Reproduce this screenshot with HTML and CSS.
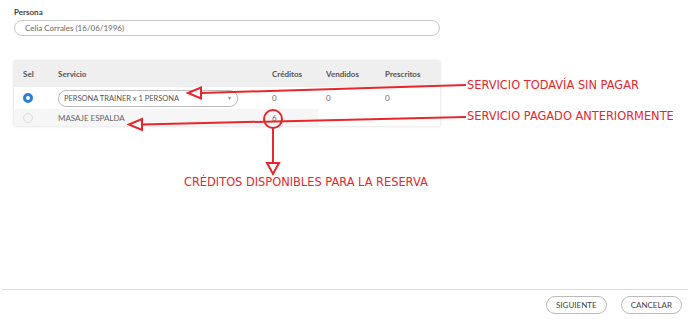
FILE: index.html
```html
<!DOCTYPE html>
<html lang="es">
<head>
    <meta charset="UTF-8">
    <title>Reserva - Servicio</title>
    <link rel="stylesheet" href="styles.css">
</head>
<body>
    <div class="page">
        <div class="form">
            <label class="label">Persona</label>
            <div class="input">Celia Corrales (16/06/1996)</div>

            <div class="table-box">
                <div class="row head">
                    <span class="c-sel">Sel</span>
                    <span class="c-serv">Servicio</span>
                    <span class="c-num">Créditos</span>
                    <span class="c-num2">Vendidos</span>
                    <span class="c-num3">Prescritos</span>
                </div>
                <div class="row">
                    <span class="c-sel"><span class="radio on"></span></span>
                    <span class="c-serv"><span class="select">PERSONA TRAINER x 1 PERSONA<i class="caret">▼</i></span></span>
                    <span class="c-num">0</span>
                    <span class="c-num2">0</span>
                    <span class="c-num3">0</span>
                </div>
                <div class="row paid">
                    <span class="paid-bg">
                        <span class="c-sel"><span class="radio"></span></span>
                        <span class="c-serv">MASAJE ESPALDA</span>
                        <span class="c-num">6</span>
                    </span>
                </div>
            </div>
        </div>

        <div class="footer">
            <button>SIGUIENTE</button>
            <button>CANCELAR</button>
        </div>

        <!-- annotations drawn over the screenshot -->
        <svg class="notes" width="688" height="319" viewBox="0 0 688 319">
            <g stroke="#e8262c" stroke-width="2" fill="none">
                <line x1="201" y1="93" x2="466" y2="85"/>
                <polygon points="188,93 201,87.5 201,98.5" fill="#fff"/>
                <line x1="142" y1="124.5" x2="466" y2="117"/>
                <polygon points="129,124.5 142,119 142,130" fill="#fff"/>
                <circle cx="273" cy="119" r="9"/>
                <line x1="273" y1="128" x2="273" y2="163"/>
                <polygon points="267,163 279,163 273,174" fill="#fff"/>
            </g>
        </svg>
        <span class="note n1">SERVICIO TODAVÍA SIN PAGAR</span>
        <span class="note n2">SERVICIO PAGADO ANTERIORMENTE</span>
        <span class="note n3">CRÉDITOS DISPONIBLES PARA LA RESERVA</span>
    </div>
</body>
</html>
```

FILE: styles.css
```css
/* General */
body {
    margin: 0;
    font-family: 'Lato', 'Open Sans', sans-serif;
    color: #555;
    background: #fff;
}

.page {
    position: relative;
    width: 688px;
    height: 319px;
    display: flex;
    flex-direction: column;
}

.form {
    padding: 7px 248px 0 14px;
    flex: 1;
}

.label {
    display: block;
    font-size: 8px;
    font-weight: bold;
    color: #444;
    margin-bottom: 3px;
}

.input {
    height: 14px;
    line-height: 14px;
    border: 1px solid #c8c8c8;
    border-radius: 8px;
    padding-left: 10px;
    font-size: 8px;
    color: #666;
}

/* Services table */
.table-box {
    margin-top: 25px;
    box-shadow: 0 0 3px rgba(0, 0, 0, 0.18);
    background: #fff;
}

.row {
    display: flex;
    align-items: center;
    height: 22px;
    font-size: 8px;
    color: #666;
}

.row.head {
    height: 26px;
    background: #efefef;
    font-weight: bold;
    color: #555;
}

.row.paid {
    height: 17px;
}

.paid-bg {
    display: flex;
    align-items: center;
    height: 100%;
    width: 304px;
    background: #f6f6f6;
}

.c-sel, .c-serv, .c-num, .c-num2, .c-num3 { flex-shrink: 0; }
.c-sel { width: 44px; padding-left: 9px; box-sizing: border-box; }
.c-serv { width: 214px; }
.c-num { width: 54px; }
.c-num2 { width: 59px; }
.c-num3 { width: 50px; }

.radio {
    display: block;
    width: 8px;
    height: 8px;
    border-radius: 50%;
    border: 1px solid #ddd;
    background: #f4f4f4;
}

.radio.on {
    background: #fff;
    border: 3px solid #2d7fd3;
    width: 4px;
    height: 4px;
}

.select {
    display: flex;
    align-items: center;
    justify-content: space-between;
    width: 168px;
    height: 15px;
    border: 1px solid #bbb;
    border-radius: 8px;
    padding: 0 5px;
    font-size: 7.5px;
    color: #555;
}

.caret {
    font-style: normal;
    font-size: 5px;
    color: #888;
}

/* Footer */
.footer {
    border-top: 1px solid #ddd;
    margin-left: 2px;
    height: 29px;
    display: flex;
    justify-content: flex-end;
    align-items: center;
    gap: 14px;
    padding-right: 6px;
}

button {
    font-family: 'Lato', sans-serif;
    font-size: 8px;
    color: #444;
    background: #fff;
    border: 1px solid #bbb;
    border-radius: 9px;
    height: 18px;
    padding: 0 9px;
}

/* Annotations */
.notes {
    position: absolute;
    left: 0;
    top: 0;
}

.note {
    position: absolute;
    font-family: 'DejaVu Sans', sans-serif;
    font-size: 11.4px;
    color: #e8262c;
    white-space: nowrap;
}

.n1 { left: 467px; top: 78px; }
.n2 { left: 467px; top: 109px; }
.n3 { left: 184px; top: 175px; }
```
